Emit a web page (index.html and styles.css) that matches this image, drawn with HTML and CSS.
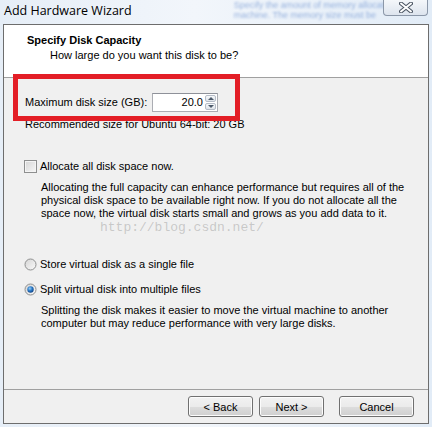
FILE: index.html
```html
<!DOCTYPE html>
<html lang="en">
<head>
    <meta charset="UTF-8">
    <meta name="viewport" content="width=device-width, initial-scale=1.0">
    <title>Add Hardware Wizard</title>
    <link rel="stylesheet" href="styles.css">
</head>
<body>
    <div class="frame">
        <div class="titlebar">
            <span class="title">Add Hardware Wizard</span>
            <div class="behind">
                <div>Specify the amount of memory allocated</div>
                <div>machine. The memory size must be</div>
            </div>
            <div class="close-btn">
                <svg width="14" height="11" viewBox="0 0 14 11">
                    <path d="M2 1.5 L12 9.5 M12 1.5 L2 9.5" stroke="#4b5563" stroke-width="4" stroke-linecap="round"/>
                    <path d="M2 1.5 L12 9.5 M12 1.5 L2 9.5" stroke="#ffffff" stroke-width="2" stroke-linecap="round"/>
                </svg>
            </div>
        </div>

        <div class="client">
            <div class="header">
                <div class="header-title">Specify Disk Capacity</div>
                <div class="header-sub">How large do you want this disk to be?</div>
            </div>

            <div class="content">
                <div class="size-row">
                    <label for="diskSize">Maximum disk size (GB):</label>
                    <div class="spin">
                        <input type="text" id="diskSize" value="20.0">
                        <div class="spin-buttons">
                            <span class="spin-btn"><span class="arrow-up"></span></span>
                            <span class="spin-btn"><span class="arrow-down"></span></span>
                        </div>
                    </div>
                </div>
                <div class="hint">Recommended size for Ubuntu 64-bit: 20 GB</div>

                <div class="option check-row">
                    <span class="checkbox"></span>
                    <span>Allocate all disk space now.</span>
                </div>
                <p class="note">Allocating the full capacity can enhance performance but requires all of the
                    physical disk space to be available right now. If you do not allocate all the
                    space now, the virtual disk starts small and grows as you add data to it.</p>

                <div class="option radio-first">
                    <svg class="radio" width="13" height="13" viewBox="0 0 13 13">
                        <defs>
                            <linearGradient id="rfill" x1="0" y1="0" x2="1" y2="1">
                                <stop offset="0" stop-color="#d4d4d4"/>
                                <stop offset="1" stop-color="#fbfbfb"/>
                            </linearGradient>
                        </defs>
                        <circle cx="6.5" cy="6.5" r="5.5" fill="url(#rfill)" stroke="#8e8f8f"/>
                    </svg>
                    <span>Store virtual disk as a single file</span>
                </div>
                <div class="option radio-second">
                    <svg class="radio" width="13" height="13" viewBox="0 0 13 13">
                        <defs>
                            <radialGradient id="rdot" cx="0.4" cy="0.35" r="0.7">
                                <stop offset="0" stop-color="#9ad0f5"/>
                                <stop offset="0.5" stop-color="#2a7ac8"/>
                                <stop offset="1" stop-color="#0f3f80"/>
                            </radialGradient>
                        </defs>
                        <circle cx="6.5" cy="6.5" r="5.5" fill="url(#rfill)" stroke="#8e8f8f"/>
                        <circle cx="6.5" cy="6.5" r="3.2" fill="url(#rdot)"/>
                    </svg>
                    <span>Split virtual disk into multiple files</span>
                </div>
                <p class="note">Splitting the disk makes it easier to move the virtual machine to another
                    computer but may reduce performance with very large disks.</p>
            </div>

            <div class="footer">
                <button class="btn btn-back">&lt; Back</button>
                <button class="btn btn-next">Next &gt;</button>
                <button class="btn btn-cancel">Cancel</button>
            </div>
        </div>

        <div class="highlight"></div>
        <div class="watermark">http://blog.csdn.net/</div>
    </div>
</body>
</html>
```

FILE: styles.css
```css
body {
    margin: 0;
    font-family: "Liberation Sans", Arial, sans-serif;
    font-size: 11px;
    color: #000;
}

.frame {
    position: relative;
    width: 432px;
    height: 427px;
    box-sizing: border-box;
    padding: 0 3px 3px 3px;
    display: flex;
    flex-direction: column;
    background: linear-gradient(to right, #e6eef7, #f2f6fb 45%, #e2ecf7);
    overflow: hidden;
}

/* title bar */
.titlebar {
    height: 24px;
    display: flex;
    align-items: center;
    white-space: nowrap;
}

.title {
    font-family: "Open Sans", sans-serif;
    font-size: 12.5px;
    margin-top: -3px;
    padding-left: 1px;
}

.behind {
    margin-left: 102px;
    margin-top: -4px;
    font-size: 9px;
    line-height: 10px;
    color: #3f6fc0;
    filter: blur(1.3px);
    opacity: 0.5;
}

.close-btn {
    position: absolute;
    top: 0;
    right: 4px;
    width: 45px;
    height: 16px;
    box-sizing: border-box;
    border: 1px solid #8b97a8;
    border-top: none;
    border-radius: 0 0 4px 4px;
    background: linear-gradient(#f4f7fa, #dde4ee);
    display: flex;
    justify-content: center;
    align-items: center;
}

/* window body */
.client {
    width: 426px;
    height: 400px;
    box-sizing: border-box;
    border: 1px solid #6d6d6d;
    background-color: #f0f0f0;
    display: flex;
    flex-direction: column;
}

.header {
    height: 53px;
    box-sizing: border-box;
    background-color: #fff;
    border-bottom: 1px solid #a0a0a0;
    padding: 9px 0 0 23px;
    line-height: 13px;
}

.header-title {
    font-weight: bold;
}

.header-sub {
    margin: 2px 0 0 23px;
}

.content {
    flex: 1;
    padding: 15px 0 0 21px;
    line-height: 13px;
}

.size-row {
    display: flex;
    align-items: center;
    height: 19px;
}

.size-row label {
    width: 127px;
}

.spin {
    display: flex;
    width: 66px;
    height: 19px;
    box-sizing: border-box;
    border: 1px solid #abadb3;
    border-top-color: #8e9199;
    background-color: #fff;
}

.spin input {
    width: 50px;
    border: none;
    outline: none;
    padding: 0 2px 0 0;
    font: inherit;
    text-align: right;
    background: transparent;
}

.spin-buttons {
    display: flex;
    flex-direction: column;
    width: 14px;
    margin: 1px 1px 1px 0;
    gap: 1px;
}

.spin-btn {
    flex: 1;
    display: flex;
    align-items: center;
    justify-content: center;
    border: 1px solid #b5bcc7;
    border-radius: 2px;
    background: linear-gradient(#f6f8fa, #dfe4ea);
}

.arrow-up {
    border-left: 3px solid transparent;
    border-right: 3px solid transparent;
    border-bottom: 3px solid #4d5a6b;
}

.arrow-down {
    border-left: 3px solid transparent;
    border-right: 3px solid transparent;
    border-top: 3px solid #4d5a6b;
}

.hint {
    margin-top: 6px;
}

.option {
    display: flex;
    align-items: center;
    gap: 3px;
    height: 13px;
    margin-left: -1px;
}

.check-row {
    margin-top: 29px;
}

.checkbox {
    width: 11px;
    height: 11px;
    border: 1px solid #8e8f8f;
    background: linear-gradient(135deg, #d6d6d6, #f7f7f7);
    box-shadow: inset 0 0 0 1px #f4f4f4;
}

.note {
    margin: 8px 0 0 16px;
}

.radio-first {
    margin-top: 38px;
}

.radio-second {
    margin-top: 12px;
}

/* buttons */
.footer {
    height: 34px;
    box-sizing: border-box;
    border-top: 1px solid #a0a0a0;
    display: flex;
    justify-content: flex-end;
    padding: 6px 14px 0 0;
}

.btn {
    height: 21px;
    padding: 0;
    font: inherit;
    color: #000;
    border: 1px solid #707070;
    border-radius: 3px;
    background: linear-gradient(#f2f2f2 0%, #ebebeb 50%, #dddddd 51%, #cfcfcf 100%);
    box-shadow: inset 0 0 0 1px #fcfcfc;
}

.btn-back {
    width: 65px;
}

.btn-next {
    width: 65px;
    margin-left: 6px;
}

.btn-cancel {
    width: 75px;
    margin-left: 15px;
}

/* overlays */
.highlight {
    position: absolute;
    left: 13px;
    top: 74px;
    width: 227px;
    height: 47px;
    box-sizing: border-box;
    border: 5px solid #e31e26;
}

.watermark {
    position: absolute;
    left: 100px;
    top: 220px;
    font-family: "Liberation Mono", monospace;
    font-size: 13px;
    color: rgba(150, 150, 150, 0.45);
}
```
